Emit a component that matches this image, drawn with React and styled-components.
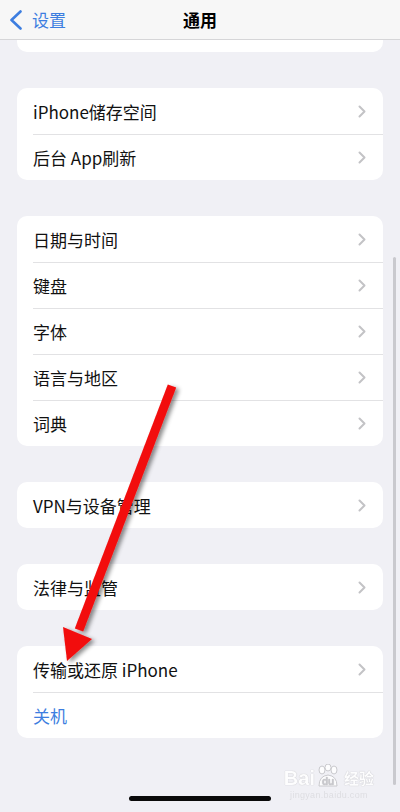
import React from 'react';
import styled, { createGlobalStyle } from 'styled-components';

const GlobalStyle = createGlobalStyle`
  html, body {
    margin: 0;
    padding: 0;
    background: #f0f0f5;
  }
  body {
    font-family: "Noto Sans CJK SC", "Noto Sans", sans-serif;
    -webkit-font-smoothing: antialiased;
  }
`;

const Screen = styled.div`
  position: relative;
  width: 400px;
  height: 812px;
  overflow: hidden;
  background: #f0f0f5;
  display: flex;
  flex-direction: column;
`;

const NavBar = styled.div`
  height: 40px;
  box-sizing: border-box;
  background: #f7f7f7;
  border-bottom: 1px solid #d6d6d8;
  display: grid;
  grid-template-columns: 1fr auto 1fr;
  align-items: center;
`;

const BackButton = styled.div`
  display: flex;
  align-items: center;
  gap: 9px;
  padding-left: 9px;
  color: #3d7ee0;
  font-size: 17px;
`;

const NavTitle = styled.div`
  font-size: 17px;
  font-weight: 700;
  color: #000;
`;

const Content = styled.div`
  display: flex;
  flex-direction: column;
  gap: 36px;
  padding: 0 17px;
`;

const CardTail = styled.div`
  height: 12px;
  background: #fff;
  border-radius: 0 0 10px 10px;
`;

const Card = styled.div`
  background: #fff;
  border-radius: 10px;
  overflow: hidden;
`;

const Row = styled.div`
  height: 46px;
  display: flex;
  align-items: center;
  justify-content: space-between;
  margin-left: 16px;
  padding-right: 17px;
  border-top: ${(p) => (p.first ? 'none' : '1px solid #e2e2e4')};
  box-sizing: border-box;
`;

const Label = styled.span`
  font-size: 17px;
  color: ${(p) => (p.action ? '#3d7ee0' : '#111')};
  white-space: nowrap;
`;

const HomeIndicator = styled.div`
  width: 142px;
  height: 5px;
  border-radius: 3px;
  background: #0a0a0a;
  margin: 58px auto 0;
`;

const ScrollIndicator = styled.div`
  position: absolute;
  right: 4px;
  top: 257px;
  width: 3px;
  height: 528px;
  border-radius: 2px;
  background: #c9c9ce;
`;

const Watermark = styled.div`
  position: absolute;
  right: 26px;
  bottom: 12px;
  display: flex;
  flex-direction: column;
  align-items: center;
  color: #ffffff;
  text-shadow: 0 0 1px #c4c4c8, 0 0 1px #c4c4c8;
  font-family: "Liberation Sans", Arial, sans-serif;
  opacity: 0.9;
`;

const MarkLine = styled.div`
  display: flex;
  align-items: flex-end;
  font-size: 20px;
  font-weight: 700;
  line-height: 20px;
`;

const MarkCn = styled.span`
  font-family: "Noto Sans CJK SC", sans-serif;
  font-size: 15px;
  margin-left: 3px;
`;

const MarkUrl = styled.div`
  font-size: 9px;
  color: #dcdce0;
  text-shadow: none;
  margin-top: 2px;
  letter-spacing: 0.3px;
`;

const Overlay = styled.svg`
  position: absolute;
  left: 0;
  top: 0;
  pointer-events: none;
`;

const Chevron = () => (
  <svg width="8" height="13" viewBox="0 0 8 13">
    <path d="M1.5 1.5 L6.5 6.5 L1.5 11.5" fill="none" stroke="#c3c3c6" strokeWidth="2" strokeLinecap="round" strokeLinejoin="round" />
  </svg>
);

const BackChevron = () => (
  <svg width="14" height="20" viewBox="0 0 14 20">
    <path d="M11.5 1.5 L2.5 10 L11.5 18.5" fill="none" stroke="#3d7ee0" strokeWidth="2.6" strokeLinecap="round" strokeLinejoin="round" />
  </svg>
);

const groups = [
  ['iPhone储存空间', '后台 App刷新'],
  ['日期与时间', '键盘', '字体', '语言与地区', '词典'],
  ['VPN与设备管理'],
  ['法律与监管'],
];

const App = () => {
  return (
    <Screen>
      <GlobalStyle />
      <NavBar>
        <BackButton>
          <BackChevron />
          设置
        </BackButton>
        <NavTitle>通用</NavTitle>
        <div />
      </NavBar>
      <Content>
        <CardTail />
        {groups.map((items, i) => (
          <Card key={i}>
            {items.map((text, j) => (
              <Row key={text} first={j === 0}>
                <Label>{text}</Label>
                <Chevron />
              </Row>
            ))}
          </Card>
        ))}
        <Card>
          <Row first>
            <Label>传输或还原 iPhone</Label>
            <Chevron />
          </Row>
          <Row>
            <Label action>关机</Label>
          </Row>
        </Card>
      </Content>
      <HomeIndicator />
      <ScrollIndicator />
      <Watermark>
        <MarkLine>
          Bai
          <svg width="26" height="24" viewBox="0 0 26 24">
            <g fill="#fff" stroke="#c4c4c8" strokeWidth="1">
              <ellipse cx="7" cy="6" rx="3" ry="4" />
              <ellipse cx="13" cy="3.5" rx="3" ry="3.5" />
              <ellipse cx="19" cy="6" rx="3" ry="4" />
              <path d="M4 22 Q4 12 13 11 Q22 12 22 22 Z" />
            </g>
            <text x="13" y="21" textAnchor="middle" fontSize="10" fontWeight="700" fill="#c4c4c8" fontFamily="Liberation Sans, sans-serif">du</text>
          </svg>
          <MarkCn>经验</MarkCn>
        </MarkLine>
        <MarkUrl>jingyan.baidu.com</MarkUrl>
      </Watermark>
      <Overlay width="400" height="812" viewBox="0 0 400 812">
        <defs>
          <filter id="shadow" x="-20%" y="-20%" width="140%" height="140%">
            <feDropShadow dx="3" dy="2" stdDeviation="2" floodColor="#000" floodOpacity="0.45" />
          </filter>
        </defs>
        <g filter="url(#shadow)" fill="#f20c0c">
          <line x1="172" y1="386" x2="79" y2="630" stroke="#f20c0c" strokeWidth="9" />
          <polygon points="63,627 92,639 67,661" />
        </g>
      </Overlay>
    </Screen>
  );
};

export default App;
